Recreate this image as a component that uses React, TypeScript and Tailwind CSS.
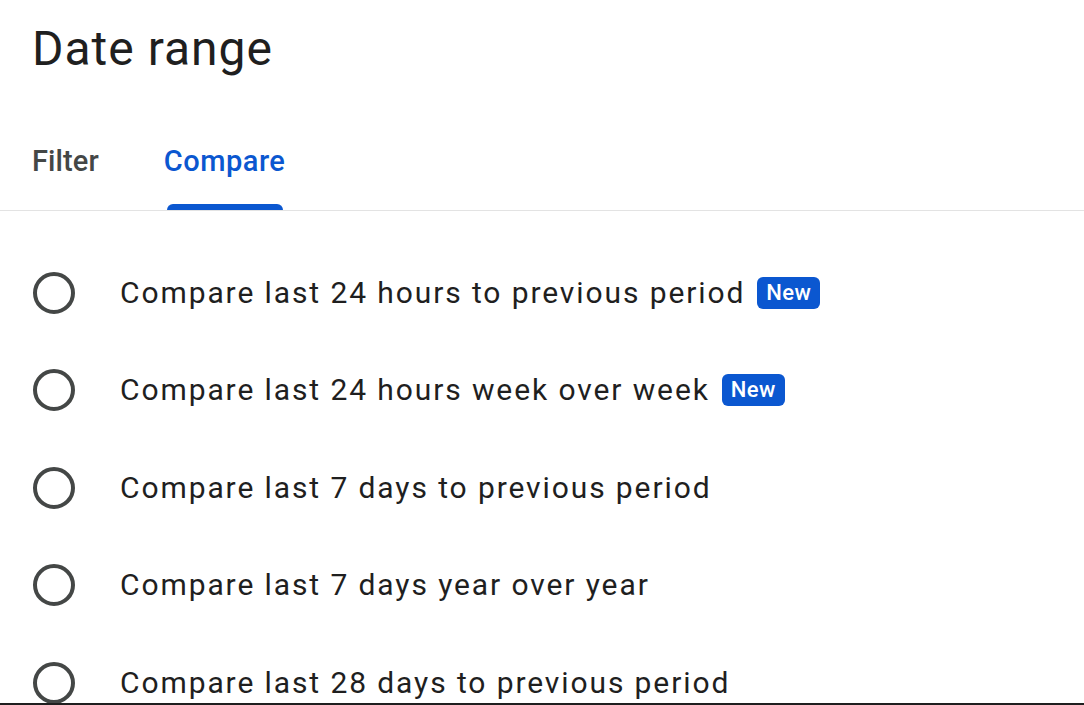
import React from 'react';

const options = [
  { label: 'Compare last 24 hours to previous period', isNew: true },
  { label: 'Compare last 24 hours week over week', isNew: true },
  { label: 'Compare last 7 days to previous period', isNew: false },
  { label: 'Compare last 7 days year over year', isNew: false },
  { label: 'Compare last 28 days to previous period', isNew: false },
];

export default function App() {
  return (
    <div
      className="w-[1084px] h-[705px] bg-white overflow-hidden border-b-2 border-[#1f1f1f] flex flex-col text-[#1f1f1f]"
      style={{ fontFamily: 'Roboto, "Noto Sans", sans-serif' }}
    >
      {/* Title */}
      <h1 className="pt-[19px] pl-8 text-[48px] leading-[60px] font-normal tracking-[1px]">Date range</h1>

      {/* Tabs */}
      <div className="mt-[62px] flex pl-8 gap-[65px] border-b border-[#e3e3e3]">
        <div className="flex flex-col">
          <span className="text-[29px] leading-[40px] font-medium tracking-[0.1px] text-[#444746]">Filter</span>
          <span className="mt-[23px] h-[6px]" />
        </div>
        <div className="flex flex-col items-center">
          <span className="text-[29px] leading-[40px] font-medium tracking-[0.5px] text-[#0b57d0]">Compare</span>
          <span className="mt-[23px] h-[6px] w-[116px] rounded-t-[6px] bg-[#0b57d0]" />
        </div>
      </div>

      {/* Options */}
      <div className="pt-[33px] flex flex-col">
        {options.map((o) => (
          <div key={o.label} className="h-[97.5px] shrink-0 flex items-center pl-[33px]">
            <span className="w-[42px] h-[42px] rounded-full border-4 border-[#444746] shrink-0" />
            <span className="ml-[45px] text-[30px] leading-[40px] tracking-[1.9px]">{o.label}</span>
            {o.isNew && (
              <span className="ml-3 h-[32px] px-[9px] rounded-[6px] bg-[#0b57d0] text-white text-[22px] leading-none font-medium tracking-[0.4px] flex items-center">
                New
              </span>
            )}
          </div>
        ))}
      </div>
    </div>
  );
}
